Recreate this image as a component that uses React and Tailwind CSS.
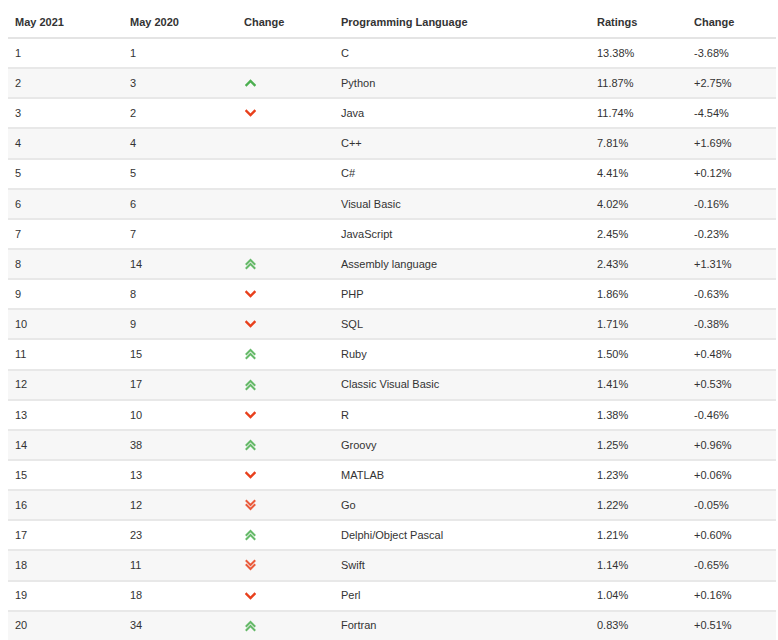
import React from "react";

const rows = [
  [1, 1, "", "C", "13.38%", "-3.68%"],
  [2, 3, "up", "Python", "11.87%", "+2.75%"],
  [3, 2, "down", "Java", "11.74%", "-4.54%"],
  [4, 4, "", "C++", "7.81%", "+1.69%"],
  [5, 5, "", "C#", "4.41%", "+0.12%"],
  [6, 6, "", "Visual Basic", "4.02%", "-0.16%"],
  [7, 7, "", "JavaScript", "2.45%", "-0.23%"],
  [8, 14, "up2", "Assembly language", "2.43%", "+1.31%"],
  [9, 8, "down", "PHP", "1.86%", "-0.63%"],
  [10, 9, "down", "SQL", "1.71%", "-0.38%"],
  [11, 15, "up2", "Ruby", "1.50%", "+0.48%"],
  [12, 17, "up2", "Classic Visual Basic", "1.41%", "+0.53%"],
  [13, 10, "down", "R", "1.38%", "-0.46%"],
  [14, 38, "up2", "Groovy", "1.25%", "+0.96%"],
  [15, 13, "down", "MATLAB", "1.23%", "+0.06%"],
  [16, 12, "down2", "Go", "1.22%", "-0.05%"],
  [17, 23, "up2", "Delphi/Object Pascal", "1.21%", "+0.60%"],
  [18, 11, "down2", "Swift", "1.14%", "-0.65%"],
  [19, 18, "down", "Perl", "1.04%", "+0.16%"],
  [20, 34, "up2", "Fortran", "0.83%", "+0.51%"],
];

// small chevron marks used by the ranking site
const Arrow = ({ kind }) => {
  if (!kind) return null;
  const up = kind.startsWith("up");
  const double = kind.endsWith("2");
  const color = up ? "#4caf50" : "#e8401c";
  const one = up ? "M1.5 6 L5.5 2 L9.5 6" : "M1.5 2 L5.5 6 L9.5 2";
  const two = up ? "M1.5 10 L5.5 6 L9.5 10" : "M1.5 6 L5.5 10 L9.5 6";
  return double ? (
    <svg width="11" height="12" viewBox="0 0 11 12" className="block">
      <g fill="none" stroke={color} strokeWidth="2" strokeLinecap="square" opacity="0.85">
        <path d={one} />
        <path d={two} />
      </g>
    </svg>
  ) : (
    <svg width="11" height="8" viewBox="0 0 11 8" className="block">
      <path d={one} fill="none" stroke={color} strokeWidth="2.4" strokeLinecap="square" />
    </svg>
  );
};

export default function App() {
  return (
    <div className="w-[778px] h-[640px] bg-white pl-2 pr-[2px] font-['Liberation_Sans',Arial,sans-serif] text-[11px] text-[#333]">
      <table className="w-full border-collapse table-fixed">
        <colgroup>
          <col className="w-[115px]" />
          <col className="w-[114px]" />
          <col className="w-[97px]" />
          <col className="w-[256px]" />
          <col className="w-[97px]" />
          <col />
        </colgroup>
        <thead>
          <tr className="h-[38px] border-b-2 border-[#e4e4e4] text-left">
            <th className="pl-[7px] pt-[8px] font-bold">May 2021</th>
            <th className="pl-[7px] pt-[8px] font-bold">May 2020</th>
            <th className="pl-[7px] pt-[8px] font-bold">Change</th>
            <th className="pl-[7px] pt-[8px] font-bold">Programming Language</th>
            <th className="pl-[7px] pt-[8px] font-bold">Ratings</th>
            <th className="pl-[7px] pt-[8px] font-bold">Change</th>
          </tr>
        </thead>
        <tbody>
          {rows.map((r, i) => (
            <tr
              key={r[0]}
              className={`h-[30.15px] border-b-2 border-[#e8e8e8] ${i % 2 === 1 ? "bg-[#f7f7f7]" : "bg-white"}`}
            >
              <td className="pl-[7px]">{r[0]}</td>
              <td className="pl-[7px]">{r[1]}</td>
              <td className="pl-[7px]">
                <div className="pl-[1px]">
                  <Arrow kind={r[2]} />
                </div>
              </td>
              <td className="pl-[7px]">{r[3]}</td>
              <td className="pl-[7px]">{r[4]}</td>
              <td className="pl-[7px]">{r[5]}</td>
            </tr>
          ))}
        </tbody>
      </table>
    </div>
  );
}
